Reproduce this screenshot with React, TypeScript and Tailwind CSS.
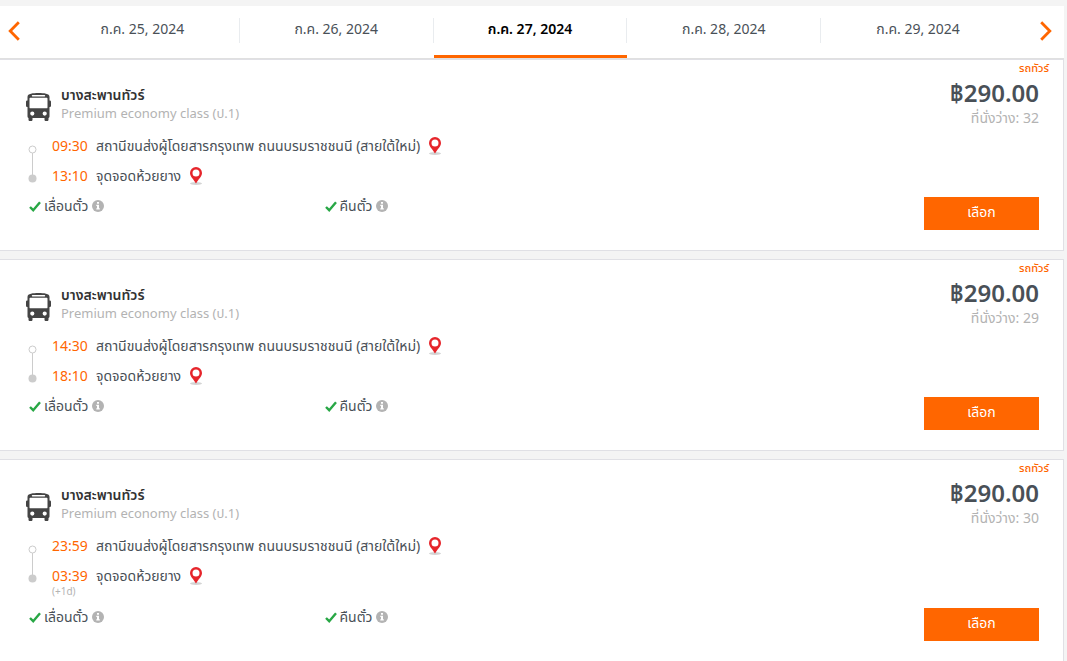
import React, { useState } from "react";

type Trip = {
  depart: string;
  arrive: string;
  nextDay?: boolean;
  seats: number;
};

const dates = ["ก.ค. 25, 2024", "ก.ค. 26, 2024", "ก.ค. 27, 2024", "ก.ค. 28, 2024", "ก.ค. 29, 2024"];

const trips: Trip[] = [
  { depart: "09:30", arrive: "13:10", seats: 32 },
  { depart: "14:30", arrive: "18:10", seats: 29 },
  { depart: "23:59", arrive: "03:39", nextDay: true, seats: 30 },
];

function BusIcon() {
  return (
    <svg width="25" height="28" viewBox="0 0 25 28" aria-hidden="true" className="shrink-0">
      <path
        fill="#444"
        fillRule="evenodd"
        d="M5 .7C9 -.1 16 -.1 20 .7 22.300 1.100 23.500 2.200 23.500 4v3.500c.9 0 1.500.5 1.500 1.300v4c0 .8-.6 1.200-1.500 1.200v9.500c0 .7-.4 1.200-1 1.500v1.700c0 .8-.6 1.300-1.400 1.300h-1.200c-.8 0-1.400-.5-1.400-1.300V25H6.500v1.700c0 .8-.6 1.300-1.400 1.300H3.900c-.8 0-1.400-.5-1.400-1.300V25c-.6-.3-1-.8-1-1.500V14C.6 14 0 13.600 0 12.800v-4C0 8 .6 7.500 1.500 7.500V4C1.500 2.200 2.700 1.100 5 .7ZM6.500 2a.7.7 0 0 0 0 1.400h12a.7.7 0 0 0 0-1.400ZM4.500 4.700C4 4.700 3.500 5 3.500 5.600v8.800c0 .5.4.9.9.9h16.200c.5 0 .9-.4.9-.9V5.600c0-.6-.5-.9-1-.9ZM6.300 18.500a2.100 2.100 0 1 0 0 4.200 2.100 2.100 0 0 0 0-4.200Zm12.400 0a2.100 2.100 0 1 0 0 4.200 2.100 2.100 0 0 0 0-4.200Z"
      />
    </svg>
  );
}

function PinButton({ label }: { label: string }) {
  return (
    <button type="button" aria-label={label} className="shrink-0 cursor-pointer">
      <svg width="14" height="18" viewBox="0 0 14 18" aria-hidden="true" className="block">
        <ellipse cx="7" cy="16.500" rx="6" ry="1.500" fill="#d4d4d4" />
        <path
          fill="#e6252b"
          fillRule="evenodd"
          d="M7 0a6 6 0 0 0-6 6c0 3.500 3.500 6 6 10.500C9.500 12 13 9.500 13 6a6 6 0 0 0-6-6Zm0 2.500a3.500 3.500 0 1 0 0 7 3.500 3.500 0 0 0 0-7Z"
        />
      </svg>
    </button>
  );
}

function Perk({ text }: { text: string }) {
  return (
    <div className="flex items-center">
      <svg width="12" height="11" viewBox="0 0 12 11" aria-hidden="true" className="mr-[3px]">
        <path d="M1 6 4.200 9.200 11 1.200" fill="none" stroke="#28a745" strokeWidth="2.400" />
      </svg>
      <span>{text}</span>
      <button type="button" aria-label={`ข้อมูล ${text}`} className="ml-1 cursor-pointer">
        <svg width="12" height="12" viewBox="0 0 12 12" aria-hidden="true">
          <circle cx="6" cy="6" r="6" fill="#b3b3b3" />
          <path fill="#fff" d="M5 2h2v1.700H5ZM4.300 4.800H7v3.400h.8v1.300H4.300V8.200H5V6h-.7Z" />
        </svg>
      </button>
    </div>
  );
}

function Stop({ time, place, nextDay }: { time: string; place: string; nextDay?: boolean }) {
  return (
    <div>
      <div className="flex h-5 items-center">
        <span className="w-11 text-[#ff6600]">{time}</span>
        <span className="mr-2">{place}</span>
        <PinButton label={`แผนที่ ${place}`} />
      </div>
      {nextDay && <div className="text-[10px] leading-[11px] text-[#b3b3b3]">(+1d)</div>}
    </div>
  );
}

function TripCard({ trip }: { trip: Trip }) {
  return (
    <article className="flex justify-between border border-l-0 border-[#e0e0e5] bg-white">
      <div className="min-w-0 grow pt-[26px] pb-[34px]">
        <div className="flex items-center gap-[10px] pl-[26px]">
          <div className="pt-[6px]">
            <BusIcon />
          </div>
          <div className="leading-[18px]">
            <h2 className="font-semibold text-[#333]">บางสะพานทัวร์</h2>
            <p className="text-[13px] leading-[18px] text-[#b3b3b3]">Premium economy class (ป.1)</p>
          </div>
        </div>
        <div className="mt-[14px] flex gap-[15px] pl-[28px]">
          <svg width="9" height="38" viewBox="0 0 9 38" aria-hidden="true" className="mt-[9px] shrink-0">
            <path d="M4.500 8v22" stroke="#ccc" />
            <circle cx="4.500" cy="4.500" r="3.500" fill="#fff" stroke="#ccc" />
            <circle cx="4.500" cy="33.500" r="4" fill="#ccc" />
          </svg>
          <div className="flex flex-col gap-[10px]">
            <Stop time={trip.depart} place="สถานีขนส่งผู้โดยสารกรุงเทพ ถนนบรมราชชนนี (สายใต้ใหม่)" />
            <Stop time={trip.arrive} place="จุดจอดห้วยยาง" nextDay={trip.nextDay} />
          </div>
        </div>
        <div className="mt-[10px] grid h-5 max-w-[620px] grid-cols-2 items-center pl-[29px]">
          <Perk text="เลื่อนตั๋ว" />
          <Perk text="คืนตั๋ว" />
        </div>
      </div>
      <div className="flex shrink-0 flex-col items-end pr-6 pb-5">
        <span className="-mr-[10px] text-[11px] leading-4 font-medium text-[#ff6600]">รถทัวร์</span>
        <strong className="text-2xl leading-[34px] font-semibold text-[#495057]">฿290.00</strong>
        <span className="leading-4 text-[#b3b3b3]">ที่นั่งว่าง: {trip.seats}</span>
        <button type="button" className="mt-auto h-[33px] w-[115px] cursor-pointer bg-[#ff6600] pb-[3px] text-white">
          เลือก
        </button>
      </div>
    </article>
  );
}

function Chevron({ d }: { d: string }) {
  return (
    <svg width="12" height="20" viewBox="0 0 12 20" aria-hidden="true">
      <path d={d} fill="none" stroke="#ff6600" strokeWidth="2.800" />
    </svg>
  );
}

export default function App() {
  const [active, setActive] = useState(2);
  return (
    <main className="min-h-screen bg-[#f4f4f4] pt-[6px] pr-[3px] font-['Noto_Sans','Noto_Sans_Thai',sans-serif] text-sm text-[#495057]">
      <nav className="flex h-[53px] border-b border-[#e0e0e0] bg-white">
        <button
          type="button"
          aria-label="วันก่อนหน้า"
          onClick={() => setActive(Math.max(0, active - 1))}
          className="flex w-[46px] shrink-0 cursor-pointer items-center pb-[2px] pl-2"
        >
          <Chevron d="M10.800 1.300 2.200 10l8.600 8.700" />
        </button>
        {dates.map((date, i) => (
          <button
            key={date}
            type="button"
            onClick={() => setActive(i)}
            className={`flex flex-1 cursor-pointer flex-col border-b-[3px] pt-3 ${
              i === active ? "border-[#ff6600] font-semibold text-black" : "border-transparent"
            }`}
          >
            <span
              className={`flex h-[25px] w-full items-center justify-center pb-1 ${
                i < dates.length - 1 ? "border-r border-[#e9ecef]" : ""
              }`}
            >
              {date}
            </span>
          </button>
        ))}
        <button
          type="button"
          aria-label="วันถัดไป"
          onClick={() => setActive(Math.min(dates.length - 1, active + 1))}
          className="flex w-[49px] shrink-0 cursor-pointer items-center justify-end pr-3 pb-[2px]"
        >
          <Chevron d="M1.200 1.300 9.800 10l-8.600 8.700" />
        </button>
      </nav>
      <div className="flex flex-col gap-2">
        {trips.map((trip) => (
          <TripCard key={trip.depart} trip={trip} />
        ))}
      </div>
    </main>
  );
}
